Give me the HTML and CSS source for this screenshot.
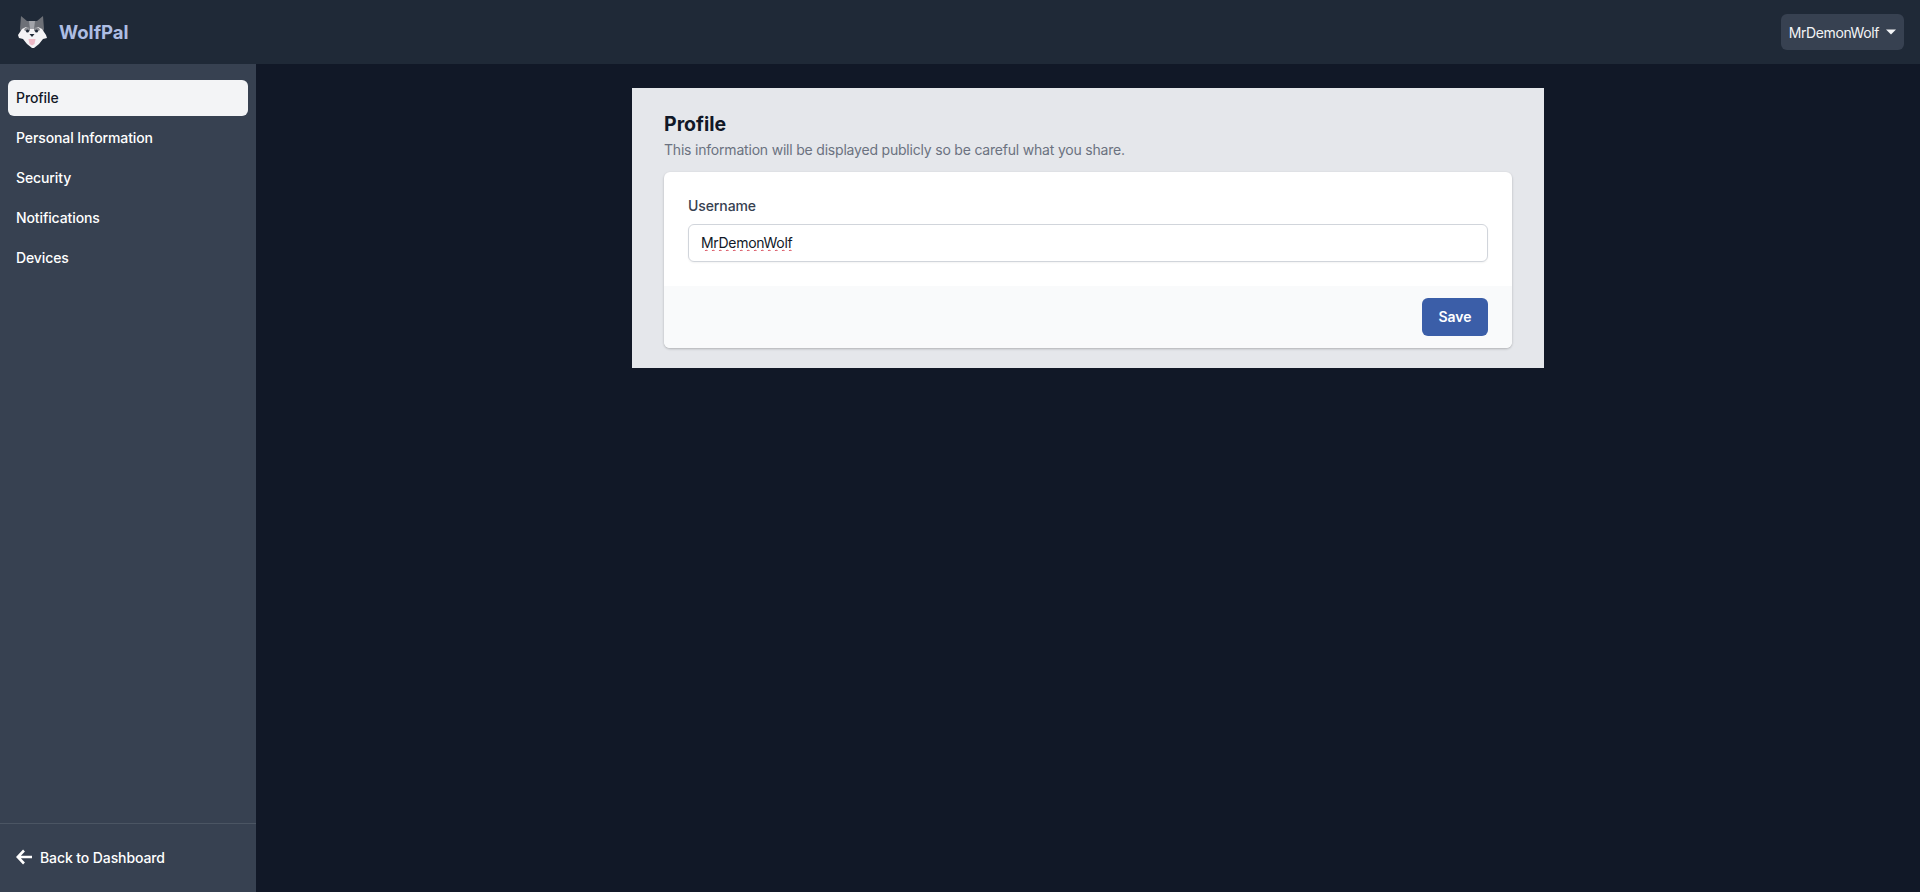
FILE: index.html
```html
<!DOCTYPE html>
<html>
<head>
    <title>WolfPal - Profile</title>
    <link rel="stylesheet" href="styles.css">
</head>
<body>
    <header class="topbar">
        <a class="brand" href="#">
            <svg class="brand-logo" viewBox="0 0 32 32" width="32" height="32">
                <path d="M5 0l6 5h10l6-5 1 13-2 6H6l-2-6z" fill="#6d7077"/>
                <path d="M2 19l4-6 4-2 3 2h6l3-2 4 2 4 6 1 3-4 1-4 5-5 4h-2l-5-4-4-5-4-1z" fill="#f4f3f5"/>
                <path d="M13 5h6l-1 8h-4z" fill="#a2a4aa"/>
                <path d="M9 12l3-1 2 2v2l-3 1-3-2zM23 12l-3-1-2 2v2l3 1 3-2z" fill="#8b8d93"/>
                <circle cx="11.500" cy="15" r="1.500" fill="#1f2937"/>
                <circle cx="20.500" cy="15" r="1.500" fill="#1f2937"/>
                <path d="M13.500 18h5L16 21z" fill="#1f2937"/>
                <path d="M12.500 23h7l-1 5-2.500 1.500-2.500-1.500z" fill="#eeb9c6"/>
            </svg>
            <span class="brand-name">WolfPal</span>
        </a>
        <button class="user-menu" type="button">
            <span>MrDemonWolf</span>
            <svg viewBox="0 0 10 6" width="10" height="6"><path d="M0 .5h10L5 5.500z" fill="#f3f4f6"/></svg>
        </button>
    </header>

    <div class="layout">
        <aside class="sidebar">
            <nav class="side-nav">
                <a class="side-link active" href="#">Profile</a>
                <a class="side-link" href="#">Personal Information</a>
                <a class="side-link" href="#">Security</a>
                <a class="side-link" href="#">Notifications</a>
                <a class="side-link" href="#">Devices</a>
            </nav>
            <div class="side-footer">
                <a class="back-link" href="#">
                    <svg viewBox="0 0 16 16" width="16" height="16"><path d="M8 1.500L1.800 8 8 14.500M2 8h14" fill="none" stroke="#fff" stroke-width="2.600"/></svg>
                    Back to Dashboard
                </a>
            </div>
        </aside>

        <main class="content">
            <section class="panel">
                <h1 class="panel-title">Profile</h1>
                <p class="panel-text">This information will be displayed publicly so be careful what you share.</p>
                <form class="card">
                    <div class="card-body">
                        <label class="field-label" for="username">Username</label>
                        <input class="field-input" type="text" id="username" name="username" value="MrDemonWolf">
                    </div>
                    <div class="card-footer">
                        <button class="save-btn" type="button">Save</button>
                    </div>
                </form>
            </section>
        </main>
    </div>
</body>
</html>
```

FILE: styles.css
```css
* {
    box-sizing: border-box;
}

body {
    font-family: Inter, "Liberation Sans", sans-serif;
    background-color: #111827;
    height: 100vh;
    margin: 0;
    padding: 0;
    display: flex;
    flex-direction: column;
    overflow: hidden;
}

a {
    text-decoration: none;
}

.topbar {
    height: 64px;
    background-color: #1f2937;
    display: flex;
    justify-content: space-between;
    align-items: center;
    padding: 0 16px;
    flex-shrink: 0;
}

.brand {
    display: flex;
    align-items: center;
    gap: 11px;
}

.brand-name {
    font-size: 18.500px;
    font-weight: 700;
    color: #adbde3;
}

.user-menu {
    height: 36px;
    padding: 0 8px;
    display: flex;
    align-items: center;
    gap: 7px;
    background-color: #374151;
    border: 0;
    border-radius: 6px;
    color: #f3f4f6;
    font-family: inherit;
    font-size: 14px;
    font-weight: 400;
    letter-spacing: -0.4px;
}

.layout {
    flex: 1;
    display: flex;
    min-height: 0;
}

.sidebar {
    width: 256px;
    background-color: #374151;
    display: flex;
    flex-direction: column;
    justify-content: space-between;
}

.side-nav {
    display: flex;
    flex-direction: column;
    gap: 4px;
    padding: 16px 8px;
}

.side-link {
    height: 36px;
    display: flex;
    align-items: center;
    padding: 0 8px 2px;
    border-radius: 6px;
    color: #ffffff;
    font-size: 14px;
    font-weight: 500;
    letter-spacing: -0.1px;
}

.side-link.active {
    background-color: #f3f4f6;
    color: #111827;
}

.side-footer {
    height: 69px;
    border-top: 1px solid #4b5563;
    padding: 0 16px 2px;
    display: flex;
    align-items: center;
}

.back-link {
    display: flex;
    align-items: center;
    gap: 8px;
    color: #ffffff;
    font-size: 14px;
    font-weight: 500;
    letter-spacing: -0.1px;
}

.content {
    flex: 1;
    display: flex;
    justify-content: center;
    align-items: flex-start;
    padding-top: 24px;
}

.panel {
    width: 912px;
    background-color: #e5e7eb;
    padding: 22px 32px 20px;
}

.panel-title {
    margin: 0 0 2px;
    font-size: 19.500px;
    line-height: 28px;
    font-weight: 700;
    color: #111827;
}

.panel-text {
    margin: 0 0 12px;
    font-size: 14px;
    line-height: 20px;
    color: #6b7280;
    letter-spacing: -0.2px;
}

.card {
    background-color: #ffffff;
    border-radius: 6px;
    box-shadow: 0 1px 3px rgba(0, 0, 0, 0.15), 0 1px 2px rgba(0, 0, 0, 0.1);
    overflow: hidden;
}

.card-body {
    padding: 24px;
    height: 114px;
}

.field-label {
    display: block;
    margin-bottom: 8px;
    font-size: 14px;
    line-height: 20px;
    font-weight: 500;
    color: #374151;
    letter-spacing: -0.1px;
}

.field-input {
    display: block;
    width: 100%;
    height: 38px;
    padding: 0 12px 2px;
    border: 1px solid #d1d5db;
    border-radius: 6px;
    box-shadow: 0 1px 2px rgba(0, 0, 0, 0.05);
    background-color: #ffffff;
    color: #111827;
    font-family: inherit;
    font-size: 14px;
    line-height: 30px;
    letter-spacing: -0.3px;
    text-decoration: underline wavy #d33a4a 1px;
    text-underline-offset: 1px;
}

.card-footer {
    background-color: #f9fafb;
    height: 62px;
    padding: 12px 24px;
    display: flex;
    justify-content: flex-end;
    align-items: center;
}

.save-btn {
    width: 66px;
    height: 38px;
    padding: 0 0 2px;
    background-color: #3b5ea8;
    border: 0;
    border-radius: 6px;
    color: #ffffff;
    font-family: inherit;
    font-size: 14px;
    font-weight: 600;
}
```
